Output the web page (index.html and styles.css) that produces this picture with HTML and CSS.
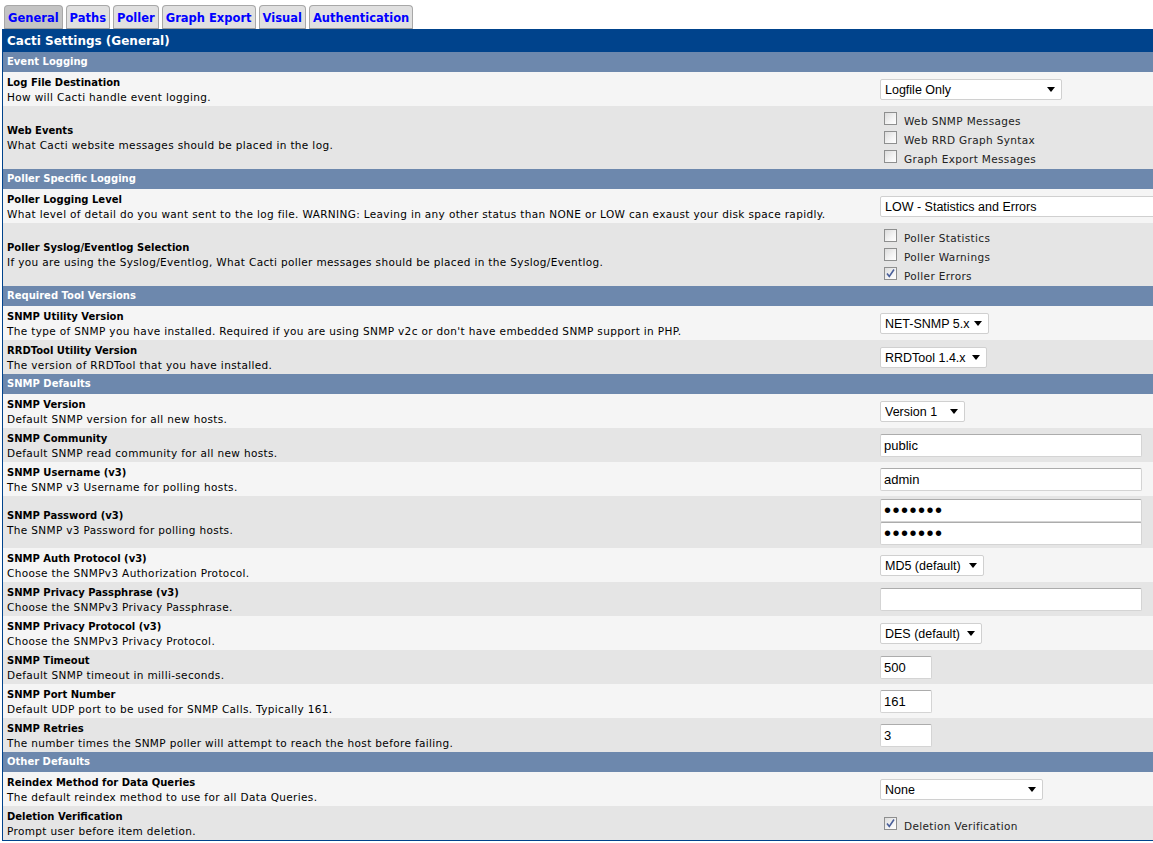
FILE: index.html
```html
<!DOCTYPE html>
<html>
<head>
<meta charset="utf-8">
<title>Cacti Settings</title>
<link rel="stylesheet" href="styles.css">
</head>
<body>
<div class="tabs">
  <a class="tab active">General</a>
  <a class="tab">Paths</a>
  <a class="tab">Poller</a>
  <a class="tab">Graph Export</a>
  <a class="tab">Visual</a>
  <a class="tab">Authentication</a>
</div>
<div class="panel">
  <div class="hdr">Cacti Settings (General)</div>

  <div class="sec">Event Logging</div>
  <div class="row light">
    <div class="lbl"><div class="t">Log File Destination</div><div class="d">How will Cacti handle event logging.</div></div>
    <div class="ctl"><span class="sel w182"><select><option>Logfile Only</option></select></span></div>
  </div>
  <div class="row dark">
    <div class="lbl"><div class="t">Web Events</div><div class="d">What Cacti website messages should be placed in the log.</div></div>
    <div class="ctl cbs">
      <div class="cbrow"><span class="cb"></span><span class="cbl">Web SNMP Messages</span></div>
      <div class="cbrow"><span class="cb"></span><span class="cbl">Web RRD Graph Syntax</span></div>
      <div class="cbrow"><span class="cb"></span><span class="cbl">Graph Export Messages</span></div>
    </div>
  </div>

  <div class="sec">Poller Specific Logging</div>
  <div class="row light">
    <div class="lbl"><div class="t">Poller Logging Level</div><div class="d">What level of detail do you want sent to the log file. WARNING: Leaving in any other status than NONE or LOW can exaust your disk space rapidly.</div></div>
    <div class="ctl"><span class="sel w320"><select><option>LOW - Statistics and Errors</option></select></span></div>
  </div>
  <div class="row dark">
    <div class="lbl"><div class="t">Poller Syslog/Eventlog Selection</div><div class="d">If you are using the Syslog/Eventlog, What Cacti poller messages should be placed in the Syslog/Eventlog.</div></div>
    <div class="ctl cbs">
      <div class="cbrow"><span class="cb"></span><span class="cbl">Poller Statistics</span></div>
      <div class="cbrow"><span class="cb"></span><span class="cbl">Poller Warnings</span></div>
      <div class="cbrow"><span class="cb"><svg viewBox="0 0 13 13" width="13" height="13"><path d="M3 6.5 L5.3 9.5 L10 2.5" fill="none" stroke="#4a5f9a" stroke-width="1.6"/></svg></span><span class="cbl">Poller Errors</span></div>
    </div>
  </div>

  <div class="sec">Required Tool Versions</div>
  <div class="row light">
    <div class="lbl"><div class="t">SNMP Utility Version</div><div class="d">The type of SNMP you have installed. Required if you are using SNMP v2c or don't have embedded SNMP support in PHP.</div></div>
    <div class="ctl"><span class="sel w109"><select><option>NET-SNMP 5.x</option></select></span></div>
  </div>
  <div class="row dark">
    <div class="lbl"><div class="t">RRDTool Utility Version</div><div class="d">The version of RRDTool that you have installed.</div></div>
    <div class="ctl"><span class="sel w107"><select><option>RRDTool 1.4.x</option></select></span></div>
  </div>

  <div class="sec">SNMP Defaults</div>
  <div class="row light">
    <div class="lbl"><div class="t">SNMP Version</div><div class="d">Default SNMP version for all new hosts.</div></div>
    <div class="ctl"><span class="sel w85"><select><option>Version 1</option></select></span></div>
  </div>
  <div class="row dark">
    <div class="lbl"><div class="t">SNMP Community</div><div class="d">Default SNMP read community for all new hosts.</div></div>
    <div class="ctl"><input class="txt" type="text" value="public"></div>
  </div>
  <div class="row light">
    <div class="lbl"><div class="t">SNMP Username (v3)</div><div class="d">The SNMP v3 Username for polling hosts.</div></div>
    <div class="ctl"><input class="txt" type="text" value="admin"></div>
  </div>
  <div class="row dark pw">
    <div class="lbl"><div class="t">SNMP Password (v3)</div><div class="d">The SNMP v3 Password for polling hosts.</div></div>
    <div class="ctl stack"><input class="txt pass" type="password" value="1234567"><input class="txt pass" type="password" value="1234567"></div>
  </div>
  <div class="row light">
    <div class="lbl"><div class="t">SNMP Auth Protocol (v3)</div><div class="d">Choose the SNMPv3 Authorization Protocol.</div></div>
    <div class="ctl"><span class="sel w104"><select><option>MD5 (default)</option></select></span></div>
  </div>
  <div class="row dark">
    <div class="lbl"><div class="t">SNMP Privacy Passphrase (v3)</div><div class="d">Choose the SNMPv3 Privacy Passphrase.</div></div>
    <div class="ctl"><input class="txt" type="text" value=""></div>
  </div>
  <div class="row light">
    <div class="lbl"><div class="t">SNMP Privacy Protocol (v3)</div><div class="d">Choose the SNMPv3 Privacy Protocol.</div></div>
    <div class="ctl"><span class="sel w102"><select><option>DES (default)</option></select></span></div>
  </div>
  <div class="row dark">
    <div class="lbl"><div class="t">SNMP Timeout</div><div class="d">Default SNMP timeout in milli-seconds.</div></div>
    <div class="ctl"><input class="txt small" type="text" value="500"></div>
  </div>
  <div class="row light">
    <div class="lbl"><div class="t">SNMP Port Number</div><div class="d">Default UDP port to be used for SNMP Calls. Typically 161.</div></div>
    <div class="ctl"><input class="txt small" type="text" value="161"></div>
  </div>
  <div class="row dark">
    <div class="lbl"><div class="t">SNMP Retries</div><div class="d">The number times the SNMP poller will attempt to reach the host before failing.</div></div>
    <div class="ctl"><input class="txt small" type="text" value="3"></div>
  </div>

  <div class="sec">Other Defaults</div>
  <div class="row light">
    <div class="lbl"><div class="t">Reindex Method for Data Queries</div><div class="d">The default reindex method to use for all Data Queries.</div></div>
    <div class="ctl"><span class="sel w163"><select><option>None</option></select></span></div>
  </div>
  <div class="row dark">
    <div class="lbl"><div class="t">Deletion Verification</div><div class="d">Prompt user before item deletion.</div></div>
    <div class="ctl"><div class="cbrow"><span class="cb"><svg viewBox="0 0 13 13" width="13" height="13"><path d="M3 6.5 L5.3 9.5 L10 2.5" fill="none" stroke="#4a5f9a" stroke-width="1.6"/></svg></span><span class="cbl">Deletion Verification</span></div></div>
  </div>
</div>
</body>
</html>
```

FILE: styles.css
```css
html, body {
  margin: 0;
  padding: 0;
  overflow: hidden;
  background: #ffffff;
  font-family: "DejaVu Sans", Verdana, sans-serif;
  color: #000000;
}

.tabs {
  display: flex;
  gap: 3px;
  padding: 5px 0 0 4px;
  box-sizing: border-box;
  height: 29px;
}

.tab {
  display: block;
  height: 24px;
  box-sizing: border-box;
  padding: 4px 3px 0 3px;
  background: #e0e0e0;
  border: 1px solid #a8a8a8;
  border-bottom: 1px solid #9a9a9a;
  border-radius: 4px 4px 0 0;
  color: #0000ff;
  font-weight: bold;
  font-size: 11.5px;
  line-height: 16px;
  white-space: nowrap;
}

.tab.active {
  background: #c4c4c4;
}

.panel {
  margin-left: 2px;
  width: 1300px;
  border-left: 1px solid #00438c;
  border-bottom: 1px solid #00438c;
}

.hdr {
  height: 23px;
  background: #00438c;
  color: #ffffff;
  font-weight: bold;
  font-size: 12px;
  line-height: 24px;
  padding-left: 4px;
}

.sec {
  height: 20px;
  background: #6d88ad;
  color: #ffffff;
  font-weight: bold;
  font-size: 10px;
  line-height: 20px;
  padding-left: 4px;
}

.row {
  display: grid;
  grid-template-columns: 873px 1fr;
  align-items: center;
  min-height: 34px;
}

.row.light { background: #f5f5f5; }
.row.dark { background: #e5e5e5; }

.lbl {
  padding: 1px 4px 0 4px;
  font-size: 10px;
  line-height: 14px;
  color: #000000;
}

.lbl .t {
  font-weight: bold;
}

.lbl .d {
  font-size: 10.5px;
  letter-spacing: 0.35px;
}

.ctl {
  padding-left: 4px;
  font-size: 10px;
}

.cbs {
  padding-top: 3px;
  padding-bottom: 3px;
}

.cbrow {
  display: flex;
  align-items: flex-start;
  height: 19px;
}

.cbl {
  font-size: 10.5px;
  letter-spacing: 0.35px;
  line-height: 14px;
  padding-top: 5px;
  color: #222222;
}

.cb {
  display: block;
  flex: none;
  width: 13px;
  height: 13px;
  box-sizing: border-box;
  margin: 3px 7px 0 4px;
  border: 1px solid #8e8f8f;
  background: linear-gradient(135deg, #dcdcdc 0%, #f4f4f4 60%, #ffffff 100%);
  position: relative;
}

.cb svg {
  position: absolute;
  left: -1px;
  top: -1px;
}

.sel {
  display: inline-block;
  position: relative;
  vertical-align: middle;
}

.sel select {
  appearance: none;
  -webkit-appearance: none;
  display: block;
  width: 100%;
  height: 21px;
  box-sizing: border-box;
  border: 1px solid #d0d0d0;
  border-radius: 2px;
  background: #ffffff;
  font-family: "Liberation Sans", Arial, sans-serif;
  font-size: 12.5px;
  color: #000000;
  padding: 1px 0 0 4px;
  margin: 0;
  outline: none;
}

.sel::after {
  content: "";
  position: absolute;
  right: 7px;
  top: 8px;
  border-left: 4px solid transparent;
  border-right: 4px solid transparent;
  border-top: 5px solid #000000;
  pointer-events: none;
}

.w182 { width: 182px; }
.w320 { width: 320px; }
.w109 { width: 109px; }
.w107 { width: 107px; }
.w85 { width: 85px; }
.w104 { width: 104px; }
.w102 { width: 102px; }
.w163 { width: 163px; }

.txt {
  display: block;
  width: 262px;
  height: 23px;
  box-sizing: border-box;
  margin: 0;
  border: 1px solid #d4d4d4;
  border-top-color: #acacac;
  border-radius: 2px;
  background: #ffffff;
  font-family: "Liberation Sans", Arial, sans-serif;
  font-size: 13px;
  color: #000000;
  padding: 1px 3px 0 3px;
  outline: none;
}

.txt.pass {
  font-size: 20px;
  letter-spacing: 1.5px;
  padding: 0 3px;
}

.txt.small {
  width: 52px;
}

.stack {
  padding-top: 3px;
  padding-bottom: 3px;
}
```
